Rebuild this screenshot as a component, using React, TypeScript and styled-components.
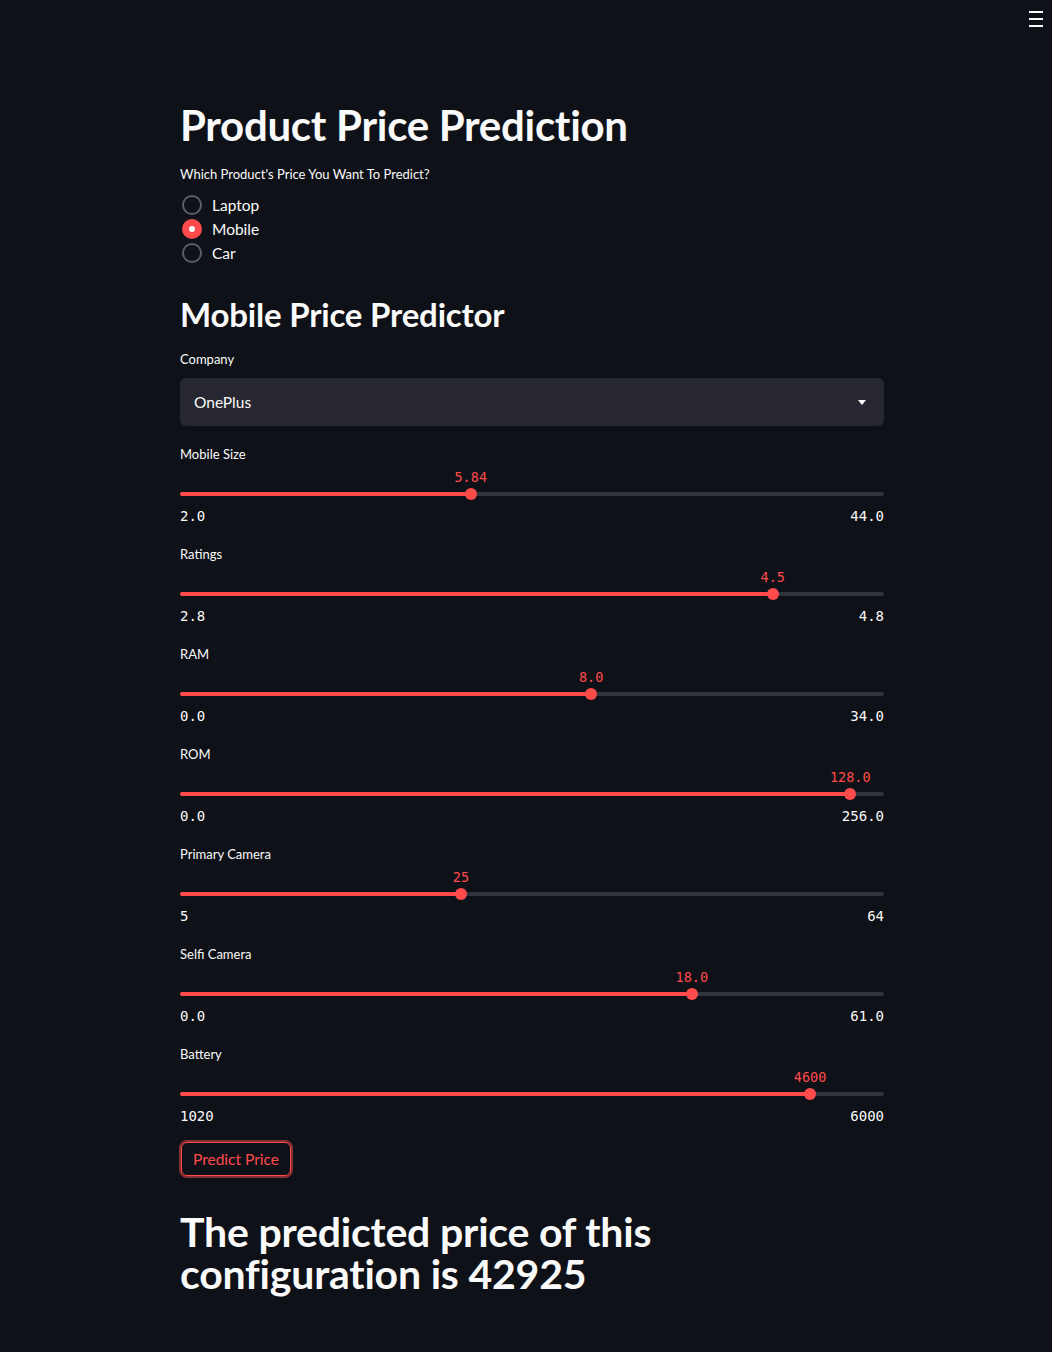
import React from "react";
import styled, { createGlobalStyle } from "styled-components";

const GlobalStyle = createGlobalStyle`
  html, body {
    margin: 0;
    padding: 0;
    background: #0e1117;
  }
  body {
    font-family: Lato, "Noto Sans", sans-serif;
    color: #fafafa;
  }
`;

const Page = styled.div`
  position: relative;
  min-height: 1352px;
  background: #0e1117;
`;

const MenuButton = styled.div`
  position: absolute;
  top: 10px;
  right: 9px;
  width: 14px;
  height: 16px;
  display: flex;
  flex-direction: column;
  justify-content: space-between;
  padding: 1px 0;
`;

const MenuBar = styled.span`
  display: block;
  height: 2px;
  background: #fafafa;
`;

const Main = styled.main`
  width: 704px;
  padding: 99px 0 60px 180px;
  display: flex;
  flex-direction: column;
`;

const Title = styled.h1`
  margin: 0;
  font-size: 42px;
  font-weight: 700;
  line-height: 52px;
  letter-spacing: -0.3px;
`;

const Heading = styled.h2<{ $top: number }>`
  margin: ${(p) => p.$top}px 0 0;
  font-size: 33px;
  font-weight: 700;
  line-height: 40px;
  letter-spacing: -0.2px;
`;

const Label = styled.div<{ $top?: number }>`
  margin-top: ${(p) => p.$top ?? 0}px;
  font-size: 13px;
  line-height: 20px;
`;

const RadioGroup = styled.div`
  margin-top: 9px;
  display: flex;
  flex-direction: column;
`;

const RadioRow = styled.label`
  display: flex;
  align-items: center;
  height: 24px;
  font-size: 15.5px;
  gap: 10px;
`;

const RadioDot = styled.span<{ $on: boolean }>`
  box-sizing: border-box;
  width: 20px;
  height: 20px;
  margin-left: 2px;
  border-radius: 50%;
  border: ${(p) => (p.$on ? "none" : "2px solid #5c5e66")};
  background: ${(p) => (p.$on ? "#ff4b4b" : "transparent")};
  display: flex;
  align-items: center;
  justify-content: center;
  &::after {
    content: "";
    display: ${(p) => (p.$on ? "block" : "none")};
    width: 6px;
    height: 6px;
    border-radius: 50%;
    background: #fafafa;
  }
`;

const Select = styled.div`
  margin-top: 9px;
  height: 48px;
  box-sizing: border-box;
  padding: 0 18px 0 14px;
  background: #262730;
  border-radius: 6px;
  display: flex;
  align-items: center;
  justify-content: space-between;
  font-size: 15.5px;
`;

const SliderBlock = styled.div`
  margin-top: 18px;
  display: flex;
  flex-direction: column;
`;

const ValueRow = styled.div`
  position: relative;
  margin-top: 2px;
  height: 20px;
`;

const mono = `"DejaVu Sans Mono", "Liberation Mono", monospace`;

const ValueText = styled.span`
  position: absolute;
  top: 1px;
  transform: translateX(-50%);
  font-family: ${mono};
  font-size: 13.5px;
  line-height: 20px;
  color: #ff4b4b;
  white-space: nowrap;
`;

const TrackRow = styled.div`
  position: relative;
  height: 16px;
  display: flex;
  align-items: center;
`;

const Track = styled.div`
  position: relative;
  width: 100%;
  height: 4px;
  border-radius: 2px;
  background: #31343d;
`;

const Fill = styled.div`
  height: 100%;
  border-radius: 2px;
  background: #ff4b4b;
`;

const Thumb = styled.div`
  position: absolute;
  top: 50%;
  width: 12px;
  height: 12px;
  border-radius: 50%;
  background: #ff4b4b;
  transform: translate(-50%, -50%);
`;

const TickRow = styled.div`
  margin-top: 4px;
  display: flex;
  justify-content: space-between;
  font-family: ${mono};
  font-size: 14px;
  line-height: 20px;
`;

const Button = styled.button`
  align-self: flex-start;
  margin-top: 16px;
  margin-left: 1px;
  height: 34px;
  padding: 0 11px;
  background: transparent;
  color: #ff4b4b;
  border: 1px solid #ff4b4b;
  border-radius: 6px;
  box-shadow: 0 0 0 2px rgba(255, 75, 75, 0.5);
  font-family: inherit;
  font-size: 15.5px;
`;

const Result = styled.h2`
  margin: 35px 0 0;
  font-size: 41px;
  font-weight: 700;
  line-height: 42px;
  letter-spacing: -0.2px;
`;

type SliderProps = {
  label: string;
  value: string;
  min: string;
  max: string;
  pct: number;
};

const sliders: SliderProps[] = [
  { label: "Mobile Size", value: "5.84", min: "2.0", max: "44.0", pct: 41.3 },
  { label: "Ratings", value: "4.5", min: "2.8", max: "4.8", pct: 84.2 },
  { label: "RAM", value: "8.0", min: "0.0", max: "34.0", pct: 58.4 },
  { label: "ROM", value: "128.0", min: "0.0", max: "256.0", pct: 95.2 },
  { label: "Primary Camera", value: "25", min: "5", max: "64", pct: 39.9 },
  { label: "Selfi Camera", value: "18.0", min: "0.0", max: "61.0", pct: 72.7 },
  { label: "Battery", value: "4600", min: "1020", max: "6000", pct: 89.5 },
];

const Slider: React.FC<SliderProps> = ({ label, value, min, max, pct }) => (
  <SliderBlock>
    <Label>{label}</Label>
    <ValueRow>
      <ValueText style={{ left: `${pct}%` }}>{value}</ValueText>
    </ValueRow>
    <TrackRow>
      <Track>
        <Fill style={{ width: `${pct}%` }} />
        <Thumb style={{ left: `${pct}%` }} />
      </Track>
    </TrackRow>
    <TickRow>
      <span>{min}</span>
      <span>{max}</span>
    </TickRow>
  </SliderBlock>
);

const products = ["Laptop", "Mobile", "Car"];

const App: React.FC = () => {
  return (
    <Page>
      <GlobalStyle />
      <MenuButton>
        <MenuBar />
        <MenuBar />
        <MenuBar />
      </MenuButton>
      <Main>
        <Title>Product Price Prediction</Title>
        <Label $top={13}>Which Product's Price You Want To Predict?</Label>
        <RadioGroup>
          {products.map((p) => (
            <RadioRow key={p}>
              <RadioDot $on={p === "Mobile"} />
              {p}
            </RadioRow>
          ))}
        </RadioGroup>
        <Heading $top={29}>Mobile Price Predictor</Heading>
        <Label $top={15}>Company</Label>
        <Select>
          <span>OnePlus</span>
          <svg width="8" height="5" viewBox="0 0 8 5">
            <path d="M0 0h8L4 5z" fill="#fafafa" />
          </svg>
        </Select>
        {sliders.map((s) => (
          <Slider key={s.label} {...s} />
        ))}
        <Button>Predict Price</Button>
        <Result>
          The predicted price of this
          <br />
          configuration is 42925
        </Result>
      </Main>
    </Page>
  );
};

export default App;
